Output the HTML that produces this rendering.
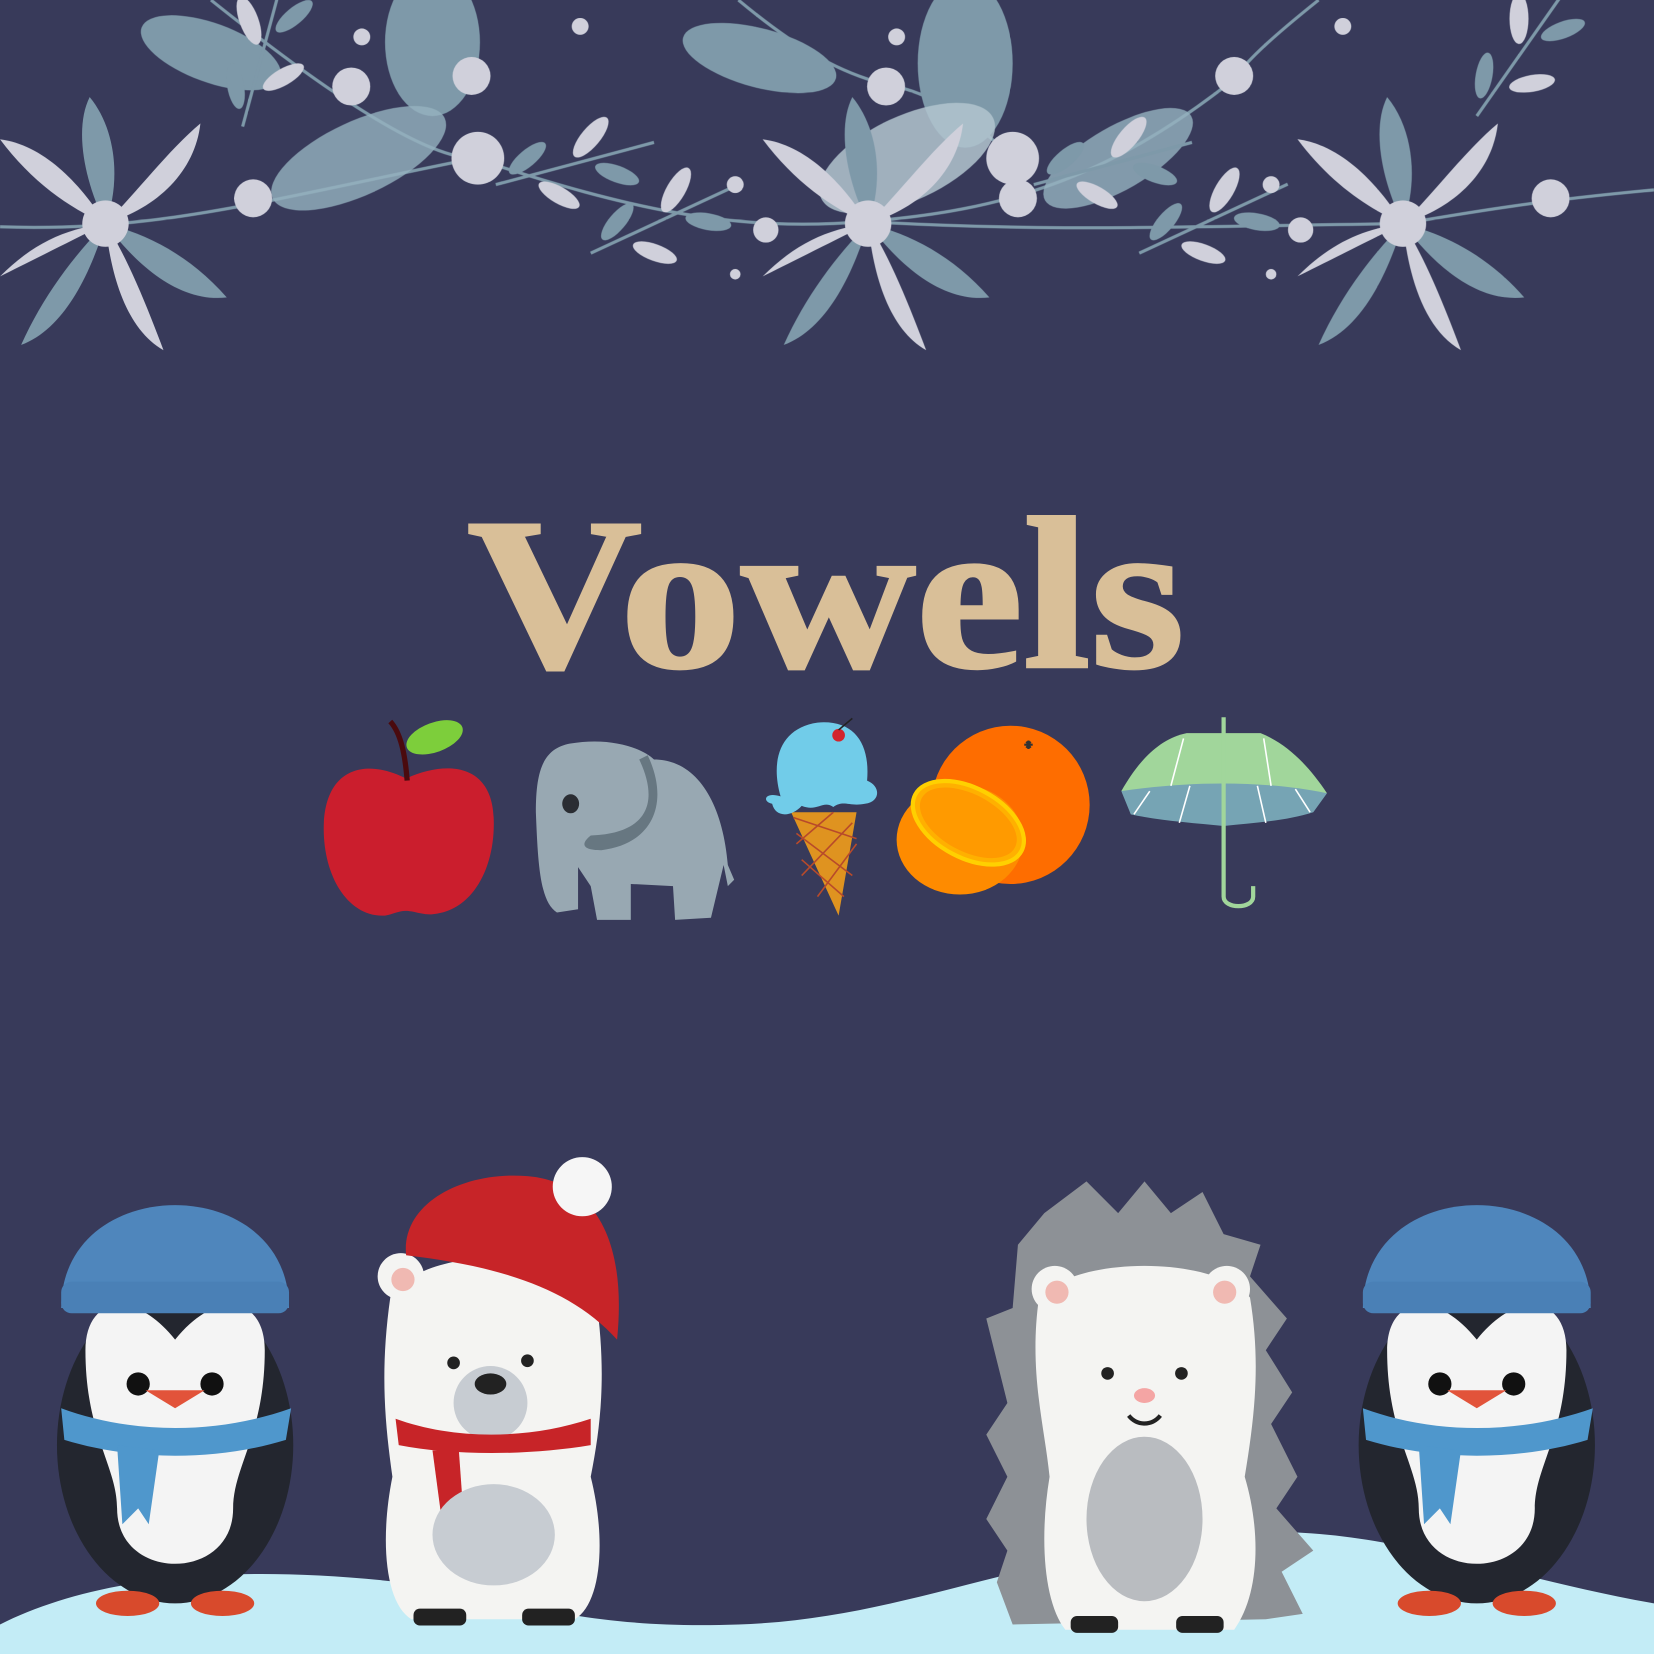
<!DOCTYPE html>
<html><head><meta charset="utf-8"><style>
html,body{margin:0;padding:0;background:#383a5a;}
svg{display:block;}
</style></head><body>
<svg width="1654" height="1654" viewBox="0 0 1568 1568" xmlns="http://www.w3.org/2000/svg">
<defs>
<g id="flower">
 <path d="M0,0 C-20,-40 -30,-90 -15,-120 C10,-90 15,-40 0,0Z" fill="#829fae"/>
 <path d="M0,0 C30,-30 60,-70 90,-95 C85,-50 50,-15 0,0Z" fill="#d8d9e3"/>
 <path d="M0,0 C40,10 80,30 115,70 C70,75 30,40 0,0Z" fill="#829fae"/>
 <path d="M0,0 C20,30 40,80 55,120 C20,100 5,50 0,0Z" fill="#d8d9e3"/>
 <path d="M0,0 C-30,30 -60,70 -80,115 C-40,100 -15,50 0,0Z" fill="#829fae"/>
 <path d="M0,0 C-40,20 -80,40 -100,50 C-70,20 -40,5 0,0Z" fill="#d8d9e3"/>
 <path d="M0,0 C-35,-15 -70,-40 -100,-80 C-60,-75 -25,-40 0,0Z" fill="#d8d9e3"/>
 <circle r="22" fill="#d8d9e3"/>
</g>
<g id="sprig">
 <path d="M0,0 L150,-40" stroke="#829fae" stroke-width="3"/>
 <ellipse cx="30" cy="-25" rx="22" ry="8" transform="rotate(-40 30 -25)" fill="#829fae"/>
 <ellipse cx="60" cy="10" rx="22" ry="8" transform="rotate(30 60 10)" fill="#d8d9e3"/>
 <ellipse cx="90" cy="-45" rx="24" ry="9" transform="rotate(-50 90 -45)" fill="#d8d9e3"/>
 <ellipse cx="115" cy="-10" rx="22" ry="8" transform="rotate(20 115 -10)" fill="#829fae"/>
</g>
<g id="penguin">
 <ellipse cx="0" cy="240" rx="112" ry="150" fill="#23262f"/>
 <path d="M0,140 C-40,90 -85,100 -85,150 C-85,230 -55,260 -55,300 C-55,370 55,370 55,300 C55,260 85,230 85,150 C85,100 40,90 0,140Z" fill="#f4f4f4"/>
 <path d="M-108,110 C-108,-20 108,-20 108,110 Z" fill="#4f86bc"/>
 <rect x="-108" y="85" width="216" height="30" rx="10" fill="#4a80b6"/>
 <circle cx="-35" cy="182" r="11" fill="#111"/><circle cx="35" cy="182" r="11" fill="#111"/>
 <path d="M-28,188 L28,188 L0,205Z" fill="#e2533a"/>
 <path d="M-108,205 C-40,230 40,230 110,205 L105,235 C40,255 -40,255 -105,235Z" fill="#4f97cc"/>
 <path d="M-55,240 L-50,315 L-35,300 L-25,315 L-15,245Z" fill="#4f97cc"/>
 <ellipse cx="-45" cy="390" rx="30" ry="12" fill="#d84a2c"/><ellipse cx="45" cy="390" rx="30" ry="12" fill="#d84a2c"/>
</g>
</defs>
<rect width="1568" height="1568" fill="#383a5a"/>
<g opacity="0.95">
 <path d="M0,215 C150,220 250,190 450,150 C600,200 700,220 820,210 C950,200 1050,170 1170,75 M820,210 C1000,220 1100,215 1330,212 C1400,200 1460,190 1568,180 M200,0 C300,80 400,150 450,150 M700,0 C760,50 800,70 840,80 C900,90 950,140 960,150 M1250,0 C1200,40 1180,60 1170,75" stroke="#829fae" stroke-width="3" fill="none"/>
 <ellipse cx="410" cy="40" rx="45" ry="70" fill="#829fae"/>
 <ellipse cx="915" cy="60" rx="45" ry="80" fill="#829fae"/>
 <ellipse cx="200" cy="50" rx="70" ry="28" transform="rotate(20 200 50)" fill="#829fae"/>
 <ellipse cx="720" cy="55" rx="75" ry="28" transform="rotate(15 720 55)" fill="#829fae"/>
 <ellipse cx="340" cy="150" rx="90" ry="35" transform="rotate(-25 340 150)" fill="#9bb9c6" opacity=".8"/>
 <ellipse cx="860" cy="150" rx="90" ry="40" transform="rotate(-25 860 150)" fill="#b9ccd6" opacity=".85"/>
 <ellipse cx="1060" cy="150" rx="80" ry="30" transform="rotate(-30 1060 150)" fill="#9bb9c6" opacity=".8"/>
 <use href="#sprig" x="470" y="175"/>
 <use href="#sprig" x="980" y="175"/>
 <use href="#sprig" x="1080" y="240" transform="rotate(-10 1080 240)"/>
 <use href="#sprig" x="560" y="240" transform="rotate(-10 560 240)"/>
 <use href="#sprig" x="1400" y="110" transform="rotate(-40 1400 110)"/>
 <use href="#sprig" x="230" y="120" transform="rotate(-60 230 120)"/>
 <use href="#flower" x="100" y="212"/>
 <use href="#flower" x="823" y="212"/>
 <use href="#flower" x="1330" y="212"/>
 <g fill="#d8d9e3">
  <circle cx="240" cy="188" r="18"/><circle cx="453" cy="150" r="25"/><circle cx="447" cy="72" r="18"/>
  <circle cx="333" cy="82" r="18"/><circle cx="840" cy="82" r="18"/><circle cx="960" cy="150" r="25"/>
  <circle cx="1170" cy="72" r="18"/><circle cx="1470" cy="188" r="18"/><circle cx="726" cy="218" r="12"/>
  <circle cx="1233" cy="218" r="12"/><circle cx="965" cy="188" r="18"/><circle cx="550" cy="25" r="8"/>
  <circle cx="343" cy="35" r="8"/><circle cx="850" cy="35" r="8"/><circle cx="1273" cy="25" r="8"/>
  <circle cx="697" cy="175" r="8"/><circle cx="1205" cy="175" r="8"/><circle cx="697" cy="260" r="5"/><circle cx="1205" cy="260" r="5"/>
 </g>
</g>
<text x="443" y="632" font-family="Liberation Serif, serif" font-weight="bold" font-size="205" fill="#d9bf98" stroke="#d9bf98" stroke-width="3" textLength="680" lengthAdjust="spacingAndGlyphs">Vowels</text>
<path d="M385,738 C350,720 310,725 307,780 C305,830 330,870 365,868 C375,866 380,862 390,864 C400,866 405,868 415,866 C450,860 470,820 468,775 C466,725 425,720 385,738Z" fill="#cb1e2d"/>
<path d="M386,740 C384,715 380,695 370,684" stroke="#4a0a0e" stroke-width="5" fill="none"/>
<ellipse cx="412" cy="699" rx="28" ry="14" transform="rotate(-20 412 699)" fill="#7dce3b"/>
<path d="M540,705 C580,698 610,710 620,720 C660,720 685,760 690,820 L696,834 L690,840 L686,820 L674,870 L640,872 L638,840 L598,838 L598,872 L566,872 L560,840 L548,822 L548,862 L528,865 C512,855 510,820 508,770 C508,730 515,710 540,705Z" fill="#98a8b2"/>
<path d="M606,720 C625,760 615,790 560,792 C550,800 552,806 570,806 C620,800 635,760 614,716Z" fill="#677781"/>
<ellipse cx="541" cy="762" rx="8" ry="9" fill="#2a2d33"/>
<path d="M750,770 L812,770 L795,868 Z" fill="#df9320"/>
<g stroke="#b84a2a" stroke-width="1.5"><path d="M755,790 L808,830 M760,815 L800,850 M752,775 L812,795 M808,780 L760,830 M812,800 L775,850 M790,770 L755,800"/></g>
<path d="M740,755 C730,720 740,690 775,685 C810,682 825,705 822,740 C835,745 835,760 820,762 C805,765 800,758 790,765 C780,758 775,770 760,764 C750,775 735,775 732,762 C722,760 725,750 740,755Z" fill="#71cce9"/>
<circle cx="795" cy="697" r="6" fill="#d3242c"/><path d="M795,692 L808,681" stroke="#222" stroke-width="1.5"/>
<circle cx="958" cy="763" r="75" fill="#fe6d00"/>
<path d="M975,702 l0,8 m-4,-4 l8,0 m-6,-3 l4,6 m0,-6 l-4,6" stroke="#333" stroke-width="2"/>
<ellipse cx="910" cy="796" rx="60" ry="52" fill="#fe8b00"/>
<ellipse cx="918" cy="780" rx="57" ry="33" transform="rotate(28 918 780)" fill="#ffb000" stroke="#ffd000" stroke-width="4"/>
<ellipse cx="918" cy="780" rx="50" ry="27" transform="rotate(28 918 780)" fill="#ff9a00"/>
<path d="M1063,750 C1080,720 1100,700 1125,695 L1195,695 C1220,705 1240,725 1258,752 Z" fill="#a1d69b"/>
<path d="M1063,750 C1130,740 1200,740 1258,752 L1245,770 C1220,778 1190,780 1160,783 C1130,780 1100,778 1072,772Z" fill="#76a4b4"/>
<g stroke="#fff" stroke-width="1.5"><path d="M1090,750 L1075,772 M1128,745 L1118,780 M1192,745 L1200,780 M1228,748 L1242,770 M1122,700 L1110,745 M1198,700 L1205,745"/></g>
<path d="M1160,680 L1160,850 C1160,862 1188,862 1188,850 L1188,840" stroke="#a1d69b" stroke-width="4" fill="none"/>
<path d="M0,1568 L0,1540 C80,1500 200,1480 380,1500 C500,1520 560,1545 700,1540 C850,1535 950,1480 1150,1455 C1300,1440 1400,1490 1568,1520 L1568,1568Z" fill="#c3ecf6"/>
<use href="#penguin" x="166" y="1130"/>
<use href="#penguin" x="1400" y="1130"/>
<g>
 <path d="M370,1230 C360,1300 365,1350 372,1400 C360,1460 365,1520 390,1535 L545,1535 C570,1520 575,1460 560,1400 C570,1350 575,1300 565,1230 C540,1180 400,1180 370,1230Z" fill="#f4f4f2"/>
 <circle cx="380" cy="1210" r="22" fill="#f4f4f2"/><circle cx="382" cy="1213" r="11" fill="#f0b9b2"/>
 <path d="M385,1190 C380,1140 440,1110 500,1115 C560,1120 595,1170 585,1270 C540,1220 470,1200 385,1190Z" fill="#c72428"/>
 <circle cx="552" cy="1125" r="28" fill="#f6f6f6"/>
 <ellipse cx="465" cy="1330" rx="35" ry="35" fill="#c7ccd2"/>
 <ellipse cx="465" cy="1312" rx="15" ry="10" fill="#222"/>
 <circle cx="430" cy="1292" r="6" fill="#222"/><circle cx="500" cy="1290" r="6" fill="#222"/>
 <path d="M375,1345 C430,1365 500,1365 560,1345 L560,1370 C500,1380 430,1380 378,1370Z" fill="#c72428"/>
 <path d="M410,1375 L420,1450 L440,1445 L435,1375Z" fill="#c72428"/>
 <ellipse cx="468" cy="1455" rx="58" ry="48" fill="#c7ccd2"/>
 <rect x="392" y="1525" width="50" height="16" rx="6" fill="#222"/><rect x="495" y="1525" width="50" height="16" rx="6" fill="#222"/>
</g>
<g>
 <path d="M965,1180 L990,1150 L1030,1120 L1060,1150 L1085,1120 L1110,1150 L1140,1130 L1160,1170 L1195,1180 L1185,1210 L1220,1250 L1200,1280 L1225,1320 L1205,1350 L1230,1400 L1210,1430 L1245,1470 L1215,1490 L1235,1530 L1200,1535 L960,1540 L945,1500 L955,1470 L935,1440 L955,1400 L935,1360 L955,1330 L935,1250 L960,1240Z" fill="#8d9196"/>
 <path d="M985,1230 C975,1300 990,1350 995,1400 C985,1460 990,1520 1010,1545 L1170,1545 C1195,1510 1195,1450 1180,1400 C1190,1340 1195,1290 1185,1230 C1150,1190 1020,1190 985,1230Z" fill="#f4f4f2"/>
 <circle cx="1000" cy="1222" r="22" fill="#f4f4f2"/><circle cx="1002" cy="1225" r="11" fill="#f0b9b2"/>
 <circle cx="1163" cy="1222" r="22" fill="#f4f4f2"/><circle cx="1161" cy="1225" r="11" fill="#f0b9b2"/>
 <circle cx="1050" cy="1302" r="6" fill="#222"/><circle cx="1120" cy="1302" r="6" fill="#222"/>
 <ellipse cx="1085" cy="1323" rx="10" ry="7" fill="#f4a5a4"/>
 <path d="M1070,1342 C1078,1352 1092,1352 1100,1342" stroke="#222" stroke-width="4" fill="none"/>
 <ellipse cx="1085" cy="1440" rx="55" ry="78" fill="#b9bcc0"/>
 <rect x="1015" y="1532" width="45" height="16" rx="6" fill="#222"/><rect x="1115" y="1532" width="45" height="16" rx="6" fill="#222"/>
</g>
</svg>
</body></html>
